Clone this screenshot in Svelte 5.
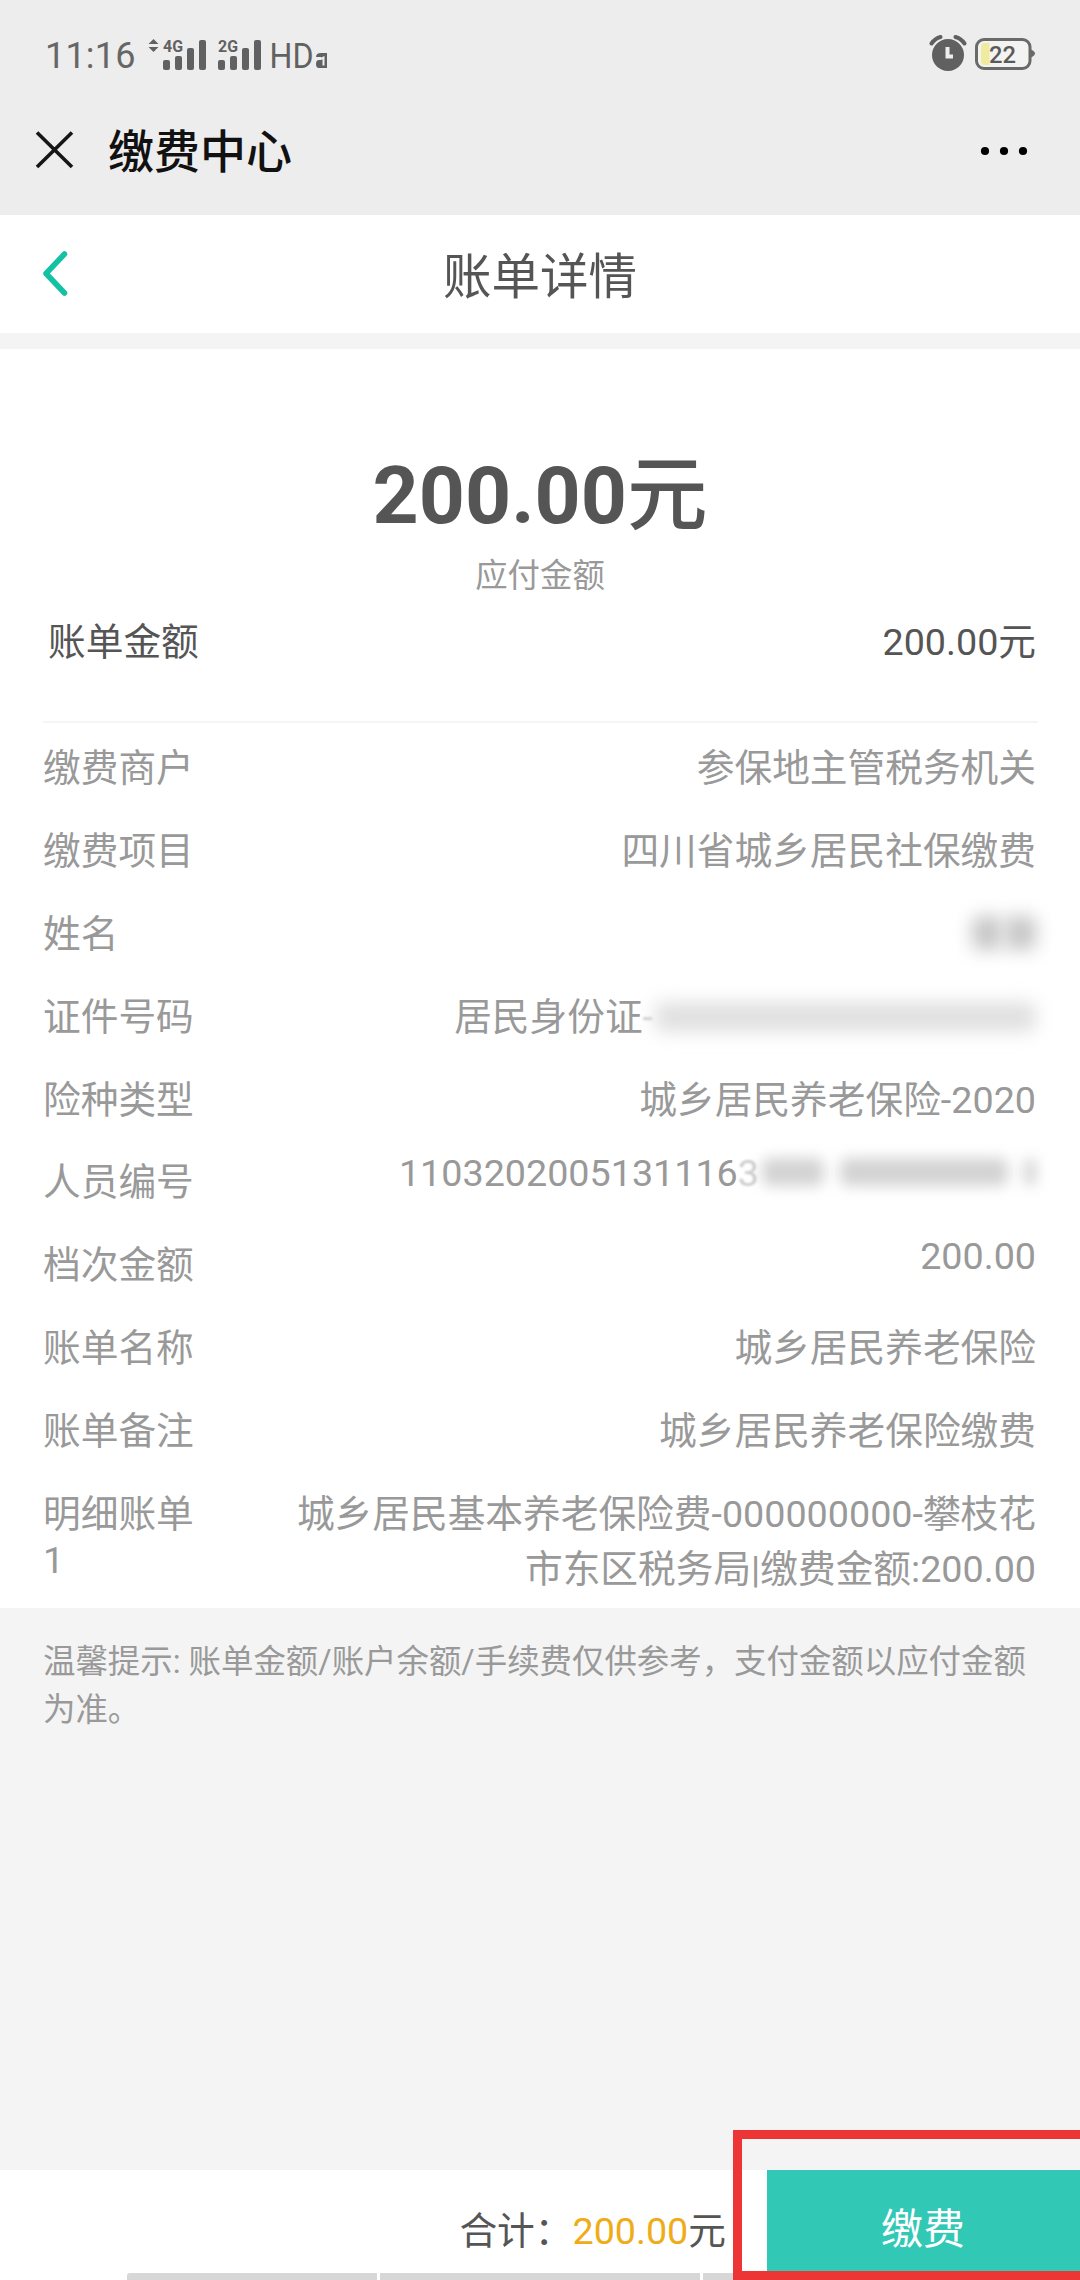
<script lang="ts">
	type Mask = "name" | "idcard" | "person";
	type Row = { label: string, value: string, faded?: string, mask?: Mask };

	const rows: Row[] = [
		{ label: "缴费商户", value: "参保地主管税务机关" },
		{ label: "缴费项目", value: "四川省城乡居民社保缴费" },
		{ label: "姓名", value: "", mask: "name" },
		{ label: "证件号码", value: "居民身份证", faded: "-", mask: "idcard" },
		{ label: "险种类型", value: "城乡居民养老保险-2020" },
		{ label: "人员编号", value: "1103202005131116", faded: "3", mask: "person" },
		{ label: "档次金额", value: "200.00" },
		{ label: "账单名称", value: "城乡居民养老保险" },
		{ label: "账单备注", value: "城乡居民养老保险缴费" },
		{ label: "明细账单1", value: "城乡居民基本养老保险费-000000000-攀枝花市东区税务局|缴费金额:200.00" },
	];

	// width of each smudge and the gap before it
	const masks: Record<Mask, { w: number, gap: number }[]> = {
		name: [{ w: 30, gap: 0 }, { w: 31, gap: 3 }],
		idcard: [{ w: 381, gap: 2 }],
		person: [{ w: 62, gap: 3 }, { w: 168, gap: 16 }, { w: 12, gap: 16 }],
	};

	const signals = [{ net: "4G", x: 16 }, { net: "2G", x: 71 }];
	const bars = [10, 14, 22, 30];
</script>

<div class="page">
	<div class="status">
		<span class="time">11:16</span>
		<svg class="signal" width="184" height="36" viewBox="0 0 184 36">
			<path d="M6.500 2l5 5h-10z M6.500 15l5-5h-10z" />
			{#each signals as s}
				<text class="net" x={s.x} y="15" textLength="20" lengthAdjust="spacingAndGlyphs">{s.net}</text>
				{#each bars as h, i}
					<rect x={s.x + i * 12} y={33 - h} width="7" height={h} rx="2" />
				{/each}
			{/each}
			<text class="hd" x="122.500" y="31" textLength="44" lengthAdjust="spacingAndGlyphs">HD</text>
			<path d="M169 20q0-4 5-4h6v15h-8q-3 0-3-4t3-4h2v-3z" />
			<path class="cut" d="M173.500 22l3-1.500v8" />
		</svg>
		<div class="right">
			<svg width="40" height="40" viewBox="0 0 40 40">
				<circle cx="19" cy="20" r="16" fill="#606060" />
				<path d="M2.500 8.500Q6 3.500 11.500 2M35.500 8.500Q32 3.500 26.500 2" fill="none" stroke="#606060" stroke-width="4" stroke-linecap="round" />
				<path d="M18.500 12v9.500h5.500" fill="none" stroke="#eee" stroke-width="4" />
			</svg>
			<svg width="62" height="36" viewBox="0 0 62 36">
				<rect x="2.500" y="2.500" width="53.500" height="29" rx="7.500" fill="#f3f3f1" stroke="#6a6a6a" stroke-width="3" />
				<path d="M10 6h5.500v22h-5.500q-3 0-3-4v-14q0-4 3-4z" fill="#f1eb9f" />
				<path d="M57 12.500q4 2 4 4t-4 4z" fill="#6a6a6a" />
				<text class="battery" x="15" y="25.500" textLength="27" lengthAdjust="spacingAndGlyphs">22</text>
			</svg>
		</div>
	</div>

	<div class="webbar">
		<svg width="40" height="40" viewBox="0 0 40 40">
			<path d="M2 2.500L37 37M37 2.500L2 37" stroke="#161616" stroke-width="3.600" />
		</svg>
		<span class="webtitle">缴费中心</span>
		<svg class="dots" width="48" height="12" viewBox="0 0 48 12">
			<circle cx="5" cy="7" r="4.100" />
			<circle cx="24" cy="7" r="4.100" />
			<circle cx="43" cy="7" r="4.100" />
		</svg>
	</div>

	<header>
		<svg width="30" height="48" viewBox="0 0 30 48">
			<path d="M24.500 4L6 23.500L24.500 43" fill="none" stroke="#14c1a5" stroke-width="5.500" stroke-linecap="round" stroke-linejoin="round" />
		</svg>
		<h1>账单详情</h1>
	</header>

	<main>
		<div class="amount">200.00<span>元</span></div>
		<div class="caption">应付金额</div>
		<div class="total">
			<span>账单金额</span>
			<span>200.00元</span>
		</div>
		<div class="rows">
			{#each rows as row}
				<div class="row">
					<div class="label">{row.label}</div>
					<div class="value">
						{row.value}{#if row.faded}<span class="faded">{row.faded}</span>{/if}{#if row.mask}<span class="mask {row.mask}">{#each masks[row.mask] as m}<i style={`width:${m.w}px;margin-left:${m.gap}px`}></i>{/each}</span>{/if}
					</div>
				</div>
			{/each}
		</div>
	</main>

	<p class="tip">温馨提示: 账单金额/账户余额/手续费仅供参考，支付金额以应付金额为准。</p>

	<footer>
		<div class="sum">合计：<b>200.00</b>元</div>
		<button>缴费</button>
		<div class="strip"><i></i><i></i><i></i></div>
		<div class="highlight"></div>
	</footer>
</div>

<style>
	:global(body) {
		background: #f4f4f4;
	}
	.page {
		display: flex;
		flex-direction: column;
		width: 1080px;
		height: 2280px;
		overflow: hidden;
		background: #f4f4f4;
		color: #555;
		font-family: Roboto, "Noto Sans CJK SC", sans-serif;
		font-size: 37.7px;
	}
	svg {
		display: block;
		flex: none;
	}
	.status {
		display: flex;
		align-items: center;
		box-sizing: border-box;
		height: 110px;
		padding: 0 44px 0 45px;
		background: #ededed;
	}
	.time {
		width: 102px;
		padding-top: 2px;
		font-size: 36px;
		letter-spacing: 0.2px;
		color: #666;
	}
	.signal {
		overflow: visible;
		fill: #616161;
	}
	.net {
		font-size: 16px;
		font-weight: 700;
	}
	.hd {
		font-size: 35px;
	}
	.cut {
		fill: none;
		stroke: #ededed;
		stroke-width: 2;
	}
	.right {
		display: flex;
		align-items: center;
		gap: 5px;
		margin-left: auto;
	}
	.battery {
		font-size: 24px;
		font-weight: 500;
		fill: #5a5a5a;
	}
	.webbar {
		display: flex;
		align-items: center;
		box-sizing: border-box;
		height: 105px;
		padding: 0 52px 25px 35px;
		background: #ededed;
	}
	.webtitle {
		margin-left: 33px;
		padding-top: 3px;
		font-size: 46px;
		font-weight: 500;
		line-height: 60px;
		color: #111;
	}
	.dots {
		margin-left: auto;
	}
	header {
		display: grid;
		grid-template-columns: 30px 1fr 30px;
		align-items: center;
		height: 118px;
		padding: 0 40px;
		background: #fff;
	}
	h1 {
		margin: 0;
		padding-top: 8px;
		font-size: 48.5px;
		font-weight: 400;
		line-height: 60px;
		text-align: center;
	}
	main {
		box-sizing: border-box;
		height: 1259px;
		margin-top: 16px;
		background: #fff;
	}
	.amount {
		padding-top: 89px;
		font-size: 80.5px;
		font-weight: 700;
		line-height: 116px;
		text-align: center;
	}
	.amount span {
		font-weight: 500;
	}
	.caption {
		margin-top: -1px;
		font-size: 32.4px;
		line-height: 46px;
		color: #999;
		text-align: center;
	}
	.total {
		display: flex;
		justify-content: space-between;
		box-sizing: border-box;
		height: 124px;
		margin: 0 42px 0 43px;
		padding: 12px 2px 0 5px;
		border-bottom: 2px solid #f5f5f5;
	}
	.rows {
		padding: 14px 44px 0 43px;
		color: #999;
	}
	.row {
		display: flex;
		justify-content: space-between;
		height: 82.900px;
	}
	.label {
		width: 160px;
		word-break: break-all;
	}
	.value {
		width: 750px;
		text-align: right;
		word-break: break-all;
	}
	.faded {
		opacity: 0.5;
		filter: blur(0.8px);
	}
	.mask i {
		display: inline-block;
		height: 30px;
		border-radius: 8px;
		background: #e0e0e0;
		filter: blur(9px);
	}
	.mask.idcard i {
		vertical-align: -2px;
	}
	.mask.name i {
		height: 34px;
		vertical-align: -12px;
		background: #c6c6c6;
	}
	.mask.person i {
		height: 28px;
		background: #d3d3d3;
		filter: blur(7px);
	}
	.tip {
		margin: 30px 43px 0;
		font-size: 32.430px;
		line-height: 48px;
		color: #999;
	}
	footer {
		position: relative;
		display: flex;
		justify-content: flex-end;
		height: 110px;
		margin-top: auto;
		background: #fff;
	}
	.sum {
		margin-right: 41px;
		line-height: 123px;
	}
	.sum b {
		font-weight: 400;
		color: #f0ac18;
	}
	button {
		width: 313px;
		height: 102px;
		padding: 9px 1px 0 0;
		border: 0;
		background: #32c8b6;
		color: #fff;
		font-family: inherit;
		font-size: 42px;
	}
	.strip {
		position: absolute;
		bottom: 0;
		left: 127px;
		display: flex;
		gap: 3px;
	}
	.strip i {
		width: 320px;
		height: 7px;
		background: #d7d7d7;
	}
	.strip i:first-child {
		width: 250px;
		border-top-left-radius: 3px;
	}
	.highlight {
		position: absolute;
		right: 0;
		bottom: 0;
		box-sizing: border-box;
		width: 347px;
		height: 150px;
		border: 9px solid #ee3536;
		border-right: 0;
	}
</style>
